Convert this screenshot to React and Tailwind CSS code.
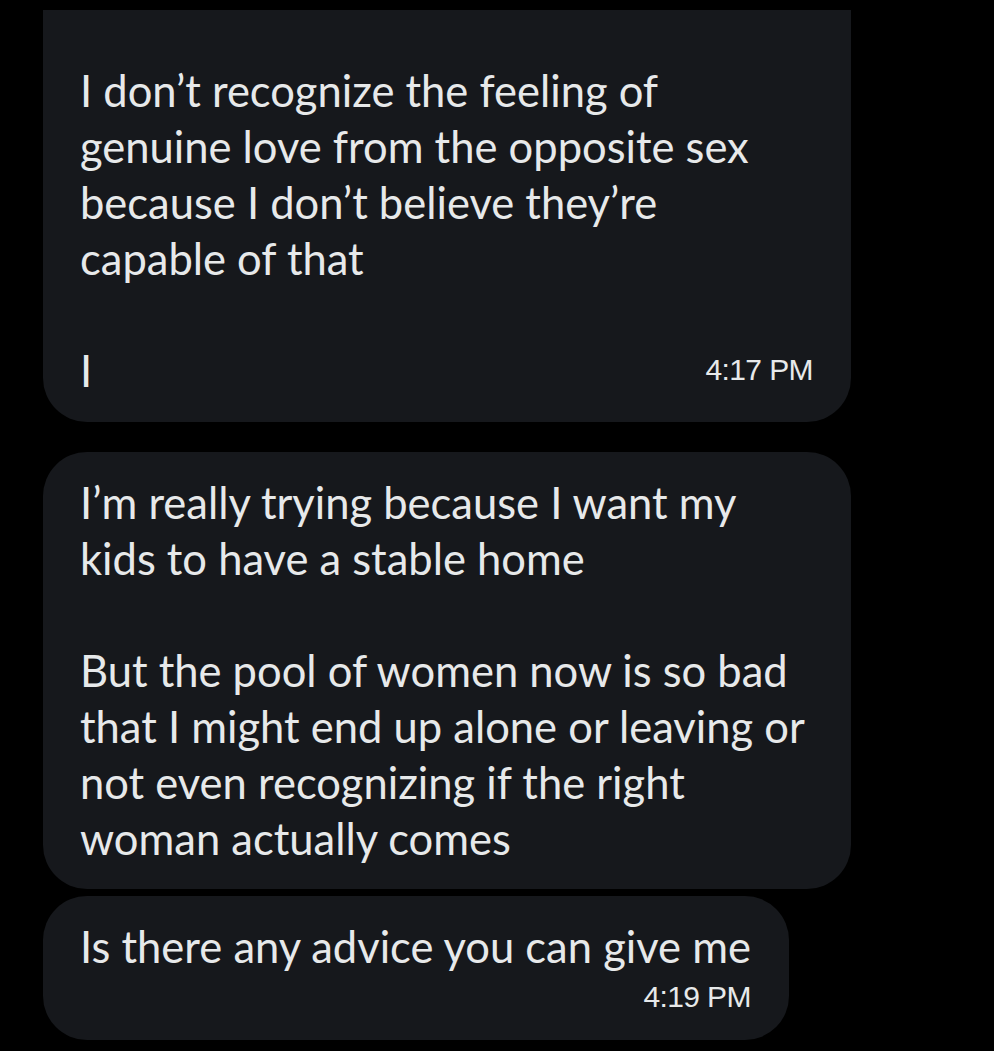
export default function App() {
  const txt = "text-[43.5px] leading-[56px] text-[#e7e9ea]";
  const font = { fontFamily: "Lato, 'Noto Sans', sans-serif" };
  const tfont = { fontFamily: "'Liberation Sans', Arial, sans-serif" };
  return (
    <div className="w-[994px] h-[1051px] bg-black overflow-hidden">
      <div className="flex flex-col pl-[43px] pt-[10px]" style={font}>
        <div className={`w-[808px] bg-[#16181c] rounded-b-[44px] pl-[37px] pr-[46px] pt-[52px] pb-[24px] ${txt}`}>
          <p>I don’t recognize the feeling of genuine love from the opposite sex because I don’t believe they’re capable of that</p>
          <p>&nbsp;</p>
          <div className="flex justify-between items-center">
            <span>I</span>
            <span className="text-[30px] tracking-[-0.6px] mr-[-8px]" style={tfont}>4:17 PM</span>
          </div>
        </div>
        <div className={`mt-[30px] w-[808px] bg-[#16181c] rounded-[44px] pl-[37px] pr-[46px] pt-[22px] pb-[23px] ${txt}`}>
          <p>I’m really trying because I want my kids to have a stable home</p>
          <p>&nbsp;</p>
          <p>But the pool of women now is so bad that I might end up alone or leaving or not even recognizing if the right woman actually comes</p>
        </div>
        <div className={`mt-[7px] w-fit bg-[#16181c] rounded-[44px] pl-[37px] pr-[38px] pt-[24px] pb-[19px] ${txt}`}>
          <p className="leading-[53px]">Is there any advice you can give me</p>
          <div className="flex justify-end">
            <span className="text-[30px] leading-[48px] tracking-[-0.6px]" style={tfont}>4:19 PM</span>
          </div>
        </div>
      </div>
    </div>
  );
}
